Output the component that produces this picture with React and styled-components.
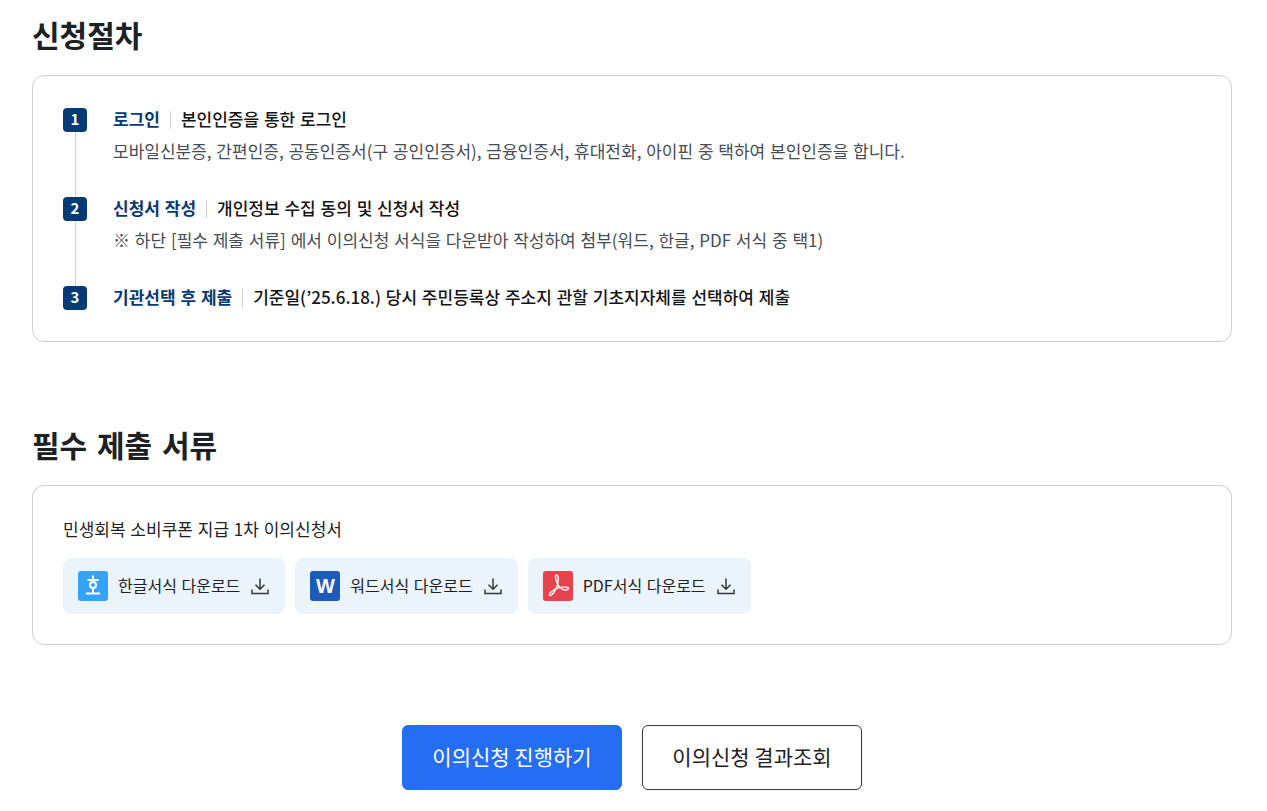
import React from "react";
import styled, { createGlobalStyle } from "styled-components";

const Global = createGlobalStyle`
  html, body { margin: 0; padding: 0; background: #fff; }
  body { font-family: "Noto Sans CJK KR", "Noto Sans", sans-serif; color: #1e2124; overflow: hidden; }
`;

const Page = styled.main`
  width: 1200px;
  margin-left: 32px;
  padding-top: 12px;
`;

const Title = styled.h2`
  margin: 0 0 19px;
  font-size: 30px;
  line-height: 44px;
  font-weight: 700;
  word-spacing: 3px;
  color: #1e2124;
`;

const Card = styled.section`
  box-sizing: border-box;
  border: 1px solid #cdd1d5;
  border-radius: 12px;
  padding: ${(p) => p.$pad};
  margin-bottom: ${(p) => p.$gap}px;
`;

const StepList = styled.ol`
  list-style: none;
  margin: 0;
  padding: 0;
`;

const Step = styled.li`
  position: relative;
  display: flex;
  gap: 26px;
  padding-bottom: ${(p) => (p.$last ? 0 : 33)}px;

  &::before {
    content: "";
    display: ${(p) => (p.$last ? "none" : "block")};
    position: absolute;
    left: 11.5px;
    top: 24px;
    bottom: 0;
    width: 1px;
    background: #cdd1d5;
  }
`;

const Badge = styled.span`
  flex: none;
  box-sizing: border-box;
  width: 24px;
  height: 24px;
  padding-bottom: 2px;
  border-radius: 4px;
  background: #063a74;
  color: #fff;
  font-size: 15px;
  font-weight: 700;
  line-height: 22px;
  text-align: center;
`;

const StepBody = styled.div`
  min-width: 0;
`;

const StepHead = styled.div`
  display: flex;
  align-items: center;
  height: 24px;
  font-size: 17px;
  line-height: 20px;
  font-weight: 500;
  word-spacing: 1px;
`;

const StepName = styled.strong`
  margin-bottom: 3px;
  font-weight: 700;
  color: #063a74;
`;

const Divider = styled.span`
  width: 1px;
  height: 18px;
  margin: 0 10px;
  background: #cdd1d5;
`;

const StepTitle = styled.span`
  margin-bottom: 3px;
  color: #131416;
`;

const StepDesc = styled.p`
  margin: 7px 0 0;
  padding-bottom: 1px;
  font-size: 17px;
  line-height: 24px;
  word-spacing: 1px;
  color: #464c53;
`;

const DocName = styled.p`
  margin: -1px 0 17px;
  font-size: 17px;
  line-height: 24px;
  word-spacing: 1px;
  color: #1e2124;
`;

const DownloadRow = styled.div`
  display: flex;
  gap: 10px;
`;

const Download = styled.a`
  display: flex;
  align-items: center;
  height: 56px;
  padding: 0 15px;
  border-radius: 8px;
  background: #ebf3fb;
  color: #1e2124;
  font-size: 16px;
  word-spacing: 1px;
`;

const DownloadLabel = styled.span`
  margin-bottom: 3px;
`;

const FileIcon = styled.span`
  flex: none;
  display: flex;
  align-items: center;
  justify-content: center;
  width: 30px;
  height: 30px;
  margin-right: 10px;
  border-radius: 3px;
  background: ${(p) => p.$bg};
`;

const WordMark = styled.span`
  color: #fff;
  font-family: "Liberation Sans", sans-serif;
  font-size: 20px;
  font-weight: 700;
`;

const SaveIcon = styled.svg`
  flex: none;
  width: 20px;
  height: 20px;
  margin-left: 10px;
`;

const Actions = styled.div`
  display: flex;
  justify-content: center;
  gap: 20px;
`;

const ActionButton = styled.button`
  box-sizing: border-box;
  width: 220px;
  height: 65px;
  padding: 0 0 3px;
  border-radius: 6px;
  border: 1px solid ${(p) => (p.$primary ? "#256ef4" : "#33363d")};
  background: ${(p) => (p.$primary ? "#256ef4" : "#fff")};
  color: ${(p) => (p.$primary ? "#fff" : "#1e2124")};
  font-family: inherit;
  font-size: 21px;
`;

const Save = () => (
  <SaveIcon viewBox="0 0 20 20" fill="none" stroke="#33363d" strokeWidth="1.5">
    <path d="M10 2.500v10.500M5.500 8.800l4.500 4.500 4.500-4.500M2 13.500v4h16v-4" />
  </SaveIcon>
);

const HwpGlyph = () => (
  <svg width="30" height="30" viewBox="0 0 30 30" fill="none" stroke="#fff" strokeWidth="2">
    <path d="M15 4.500v4M9.500 9h11M15 17.500V22M8 22.500h14" />
    <circle cx="15" cy="14" r="3" />
  </svg>
);

const PdfGlyph = () => (
  <svg width="30" height="30" viewBox="0 0 30 30" fill="none" stroke="#fff" strokeWidth="1.4" strokeLinejoin="round">
    <path d="M13.500 4c-1.600 0-1.200 4 .5 8 1.800 4 4.500 6.500 8 7 3 .4 4.500-1.800 2.500-2.500-3-1-8.800-.2-13 2-4 2.100-5.800 5.200-4.800 6 1.500 1 5-3.500 7-8.500 1.500-4 2.600-12-.2-12z" />
  </svg>
);

const STEPS = [
  {
    name: "로그인",
    title: "본인인증을 통한 로그인",
    desc: "모바일신분증, 간편인증, 공동인증서(구 공인인증서), 금융인증서, 휴대전화, 아이핀 중 택하여 본인인증을 합니다.",
  },
  {
    name: "신청서 작성",
    title: "개인정보 수집 동의 및 신청서 작성",
    desc: "※ 하단 [필수 제출 서류] 에서 이의신청 서식을 다운받아 작성하여 첨부(워드, 한글, PDF 서식 중 택1)",
  },
  {
    name: "기관선택 후 제출",
    title: "기준일(’25.6.18.) 당시 주민등록상 주소지 관할 기초지자체를 선택하여 제출",
  },
];

export default function App() {
  return (
    <Page>
      <Global />
      <Title>신청절차</Title>
      <Card $gap={80} $pad="32px 30px 31px">
        <StepList>
          {STEPS.map((step, i) => (
            <Step key={step.name} $last={i === STEPS.length - 1}>
              <Badge>{i + 1}</Badge>
              <StepBody>
                <StepHead>
                  <StepName>{step.name}</StepName>
                  <Divider />
                  <StepTitle>{step.title}</StepTitle>
                </StepHead>
                {step.desc && <StepDesc>{step.desc}</StepDesc>}
              </StepBody>
            </Step>
          ))}
        </StepList>
      </Card>
      <Title>필수 제출 서류</Title>
      <Card $gap={80} $pad="32px 30px 30px">
        <DocName>민생회복 소비쿠폰 지급 1차 이의신청서</DocName>
        <DownloadRow>
          <Download>
            <FileIcon $bg="#36a3fa"><HwpGlyph /></FileIcon>
            <DownloadLabel>한글서식 다운로드</DownloadLabel>
            <Save />
          </Download>
          <Download>
            <FileIcon $bg="#1c5cb8"><WordMark>W</WordMark></FileIcon>
            <DownloadLabel>워드서식 다운로드</DownloadLabel>
            <Save />
          </Download>
          <Download>
            <FileIcon $bg="#e5444d"><PdfGlyph /></FileIcon>
            <DownloadLabel>PDF서식 다운로드</DownloadLabel>
            <Save />
          </Download>
        </DownloadRow>
      </Card>
      <Actions>
        <ActionButton $primary>이의신청 진행하기</ActionButton>
        <ActionButton>이의신청 결과조회</ActionButton>
      </Actions>
    </Page>
  );
}
